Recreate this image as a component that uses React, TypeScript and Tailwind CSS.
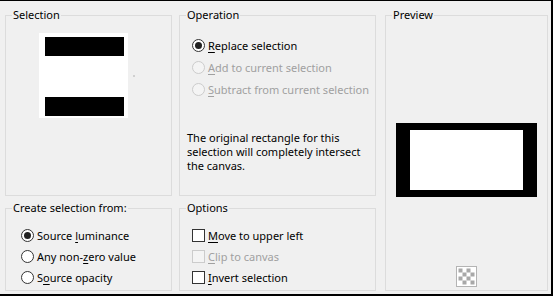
import React from "react";

type Key = { pre: string; k: string; post: string };

function Label({ pre, k, post }: Key) {
  return (
    <span className="whitespace-nowrap">
      {pre}
      <span className="underline underline-offset-2">{k}</span>
      {post}
    </span>
  );
}

function Radio({
  label,
  checked,
  disabled,
}: {
  label: Key;
  checked?: boolean;
  disabled?: boolean;
}) {
  return (
    <div className="flex h-[21px] items-center gap-[3px]">
      <span
        className={
          disabled
            ? "flex h-[13px] w-[13px] items-center justify-center rounded-full border border-[#cccccc] bg-[#f4f4f4]"
            : "flex h-[13px] w-[13px] items-center justify-center rounded-full border border-[#333333] bg-white"
        }
      >
        {checked && <span className="h-[7px] w-[7px] rounded-full bg-[#222222]" />}
      </span>
      <span className={disabled ? "text-[#a0a0a0]" : "text-black"}>
        <Label {...label} />
      </span>
    </div>
  );
}

function Check({ label, disabled }: { label: Key; disabled?: boolean }) {
  return (
    <div className="flex h-[21px] items-center gap-[3px]">
      <span
        className={
          disabled
            ? "h-[13px] w-[13px] border border-[#cccccc] bg-[#f4f4f4]"
            : "h-[13px] w-[13px] border border-[#333333] bg-white"
        }
      />
      <span className={disabled ? "text-[#a0a0a0]" : "text-black"}>
        <Label {...label} />
      </span>
    </div>
  );
}

function Group({
  title,
  className,
  children,
}: {
  title: string;
  className: string;
  children: React.ReactNode;
}) {
  return (
    <fieldset className={`border border-[#dcdcdc] ${className}`}>
      <legend className="ml-[6px] px-[1px] leading-[14px] whitespace-nowrap text-black">{title}</legend>
      {children}
    </fieldset>
  );
}

function Checker() {
  const cells = [];
  for (let r = 0; r < 4; r++)
    for (let c = 0; c < 4; c++)
      if ((r + c) % 2 === 0)
        cells.push(<rect key={`${r}-${c}`} x={2.5 + c * 4} y={2.5 + r * 4} width="4" height="4" fill="#a8a8a8" />);
  return (
    <svg width="21" height="21" viewBox="0 0 21 21">
      <rect x="0.5" y="0.5" width="20" height="20" fill="#ffffff" stroke="#b4b4b4" />
      {cells}
    </svg>
  );
}

export default function App() {
  return (
    <div className="h-[296px] w-[553px] border-t border-r-2 border-b-2 border-black bg-[#f0f0f0] font-['Segoe_UI','Noto_Sans',sans-serif] text-[11px] leading-[14px]">
      <div className="flex pt-[7px] pl-[5px]">
        <div className="flex w-[167px] flex-col gap-[5px]">
          <Group title="Selection" className="h-[188px]">
            <div className="mt-[11px] ml-[33px] flex items-center">
              <div className="flex h-[85px] w-[89px] flex-col justify-between bg-white pt-[4px] pb-[2px] pl-[6px]">
                <div className="h-[19px] w-[79px] bg-black" />
                <div className="h-[19px] w-[79px] bg-black" />
              </div>
              <span className="ml-[5px] h-[2px] w-[2px] bg-[#d0d0d0]" />
            </div>
          </Group>
          <Group title="Create selection from:" className="h-[90px]">
            <div className="mt-[10px] pl-[15px]">
              <Radio checked label={{ pre: "Source ", k: "l", post: "uminance" }} />
              <Radio label={{ pre: "Any non-", k: "z", post: "ero value" }} />
              <Radio label={{ pre: "S", k: "o", post: "urce opacity" }} />
            </div>
          </Group>
        </div>

        <div className="ml-[7px] flex w-[197px] flex-col gap-[5px]">
          <Group title="Operation" className="h-[188px]">
            <div className="mt-[13px] flex flex-col gap-[1px] pl-[12px]">
              <Radio checked label={{ pre: "", k: "R", post: "eplace selection" }} />
              <Radio disabled label={{ pre: "", k: "A", post: "dd to current selection" }} />
              <Radio disabled label={{ pre: "", k: "S", post: "ubtract from current selection" }} />
            </div>
            <p className="mt-[31px] pl-[7px] whitespace-nowrap text-black">
              The original rectangle for this
              <br />
              selection will completely intersect
              <br />
              the canvas.
            </p>
          </Group>
          <Group title="Options" className="h-[90px]">
            <div className="mt-[10px] pl-[12px]">
              <Check label={{ pre: "", k: "M", post: "ove to upper left" }} />
              <Check disabled label={{ pre: "", k: "C", post: "lip to canvas" }} />
              <Check label={{ pre: "", k: "I", post: "nvert selection" }} />
            </div>
          </Group>
        </div>

        <div className="ml-[9px] w-[163px]">
          <Group title="Preview" className="flex h-[283px] flex-col items-center">
            <div className="mt-[101px] h-[74px] w-[141px] border-x-[14px] border-y-[7px] border-black bg-white" />
            <div className="mt-[69px]">
              <Checker />
            </div>
          </Group>
        </div>
      </div>
    </div>
  );
}
